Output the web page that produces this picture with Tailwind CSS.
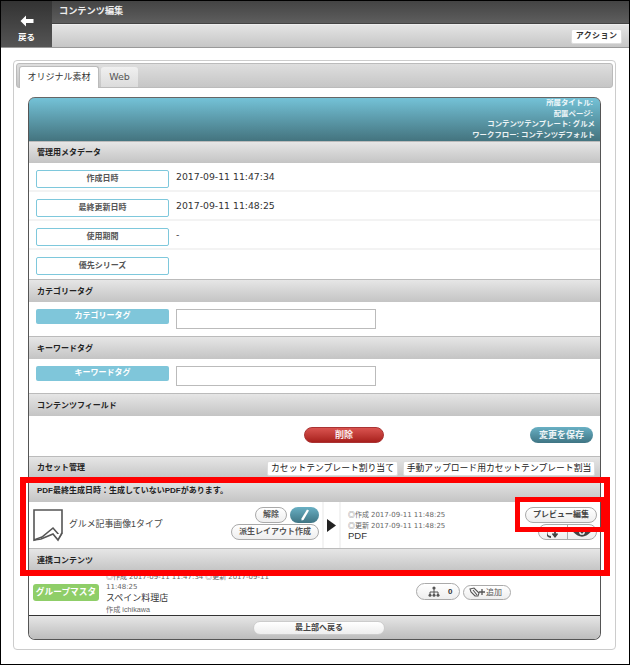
<!DOCTYPE html>
<html lang="ja">
<head>
<meta charset="utf-8">
<title>コンテンツ編集</title>
<script src="https://cdn.jsdelivr.net/npm/@tailwindcss/browser@4"></script>
</head>
<body class="bg-white">
<div class="relative w-[630px] h-[665px] border border-black bg-white overflow-hidden font-['Liberation_Sans','Noto_Sans_CJK_JP',sans-serif] text-[#333]">

  <!-- Top bar -->
  <header class="flex h-[47px] border-b border-[#999]">
    <div class="w-[51px] shrink-0 flex flex-col items-center pt-[14px] bg-gradient-to-b from-[#333] to-[#555] text-white">
      <svg width="14" height="12" viewBox="0 0 14 12"><path d="M6 0.5 L0.5 6 L6 11.5 L6 8 L13.5 8 L13.5 4 L6 4 Z" fill="#fff"/></svg>
      <span class="text-[8.5px] font-bold leading-none mt-[6px]">戻る</span>
    </div>
    <div class="flex-1 flex flex-col">
      <div class="h-[23px] bg-gradient-to-b from-[#444] to-[#5e5e5e] border-b border-[#444] pl-[7px] text-[9.2px] font-bold text-[#eee] leading-[21px]">コンテンツ編集</div>
      <div class="flex-1 bg-gradient-to-b from-[#e4e4e4] to-[#c6c6c6] border-t border-[#eee] flex justify-end items-center pr-[7px]">
        <button class="h-[15px] w-[51px] bg-white border border-[#ddd] rounded-[2px] text-[8px] font-bold leading-none tracking-[0.4px]">アクション</button>
      </div>
    </div>
  </header>

  <!-- Panel -->
  <div class="ml-[12px] mt-[12px] w-[603px] h-[590px] border border-[#ccc] rounded-[4px] px-[2px] pt-[2px]">
    <div class="h-[25px] bg-gradient-to-b from-[#dedede] to-[#c6c6c6] border border-[#bbb] rounded-[3px] flex items-end pl-[2px] gap-[2px]">
      <div class="w-[80px] h-[22px] -mb-px bg-white border border-[#bbb] border-b-0 rounded-t-[3px] text-[9px] text-center leading-[20px]">オリジナル素材</div>
      <div class="w-[37px] h-[20px] bg-gradient-to-b from-[#f0f0f0] to-[#dcdcdc] rounded-t-[3px] text-[9.5px] text-center leading-[20px] text-[#555] font-['DejaVu_Sans',sans-serif]">Web</div>
    </div>

    <!-- Card -->
    <div class="mt-[9px] ml-[12px] w-[573px] h-[543px] flex flex-col bg-white border-x border-x-[#555] rounded-[7px] border-b border-b-[#555]">
      <div class="h-[44px] shrink-0 rounded-t-[6px] border-t border-t-[#666] bg-gradient-to-b from-[#74c2d7] to-[#44747f] text-right pr-[5px] text-[7.4px] font-bold text-white/90 leading-[10.6px]">
        <p class="pr-[2px]">所属タイトル:</p>
        <p class="pr-[2px]">配置ページ:</p>
        <p>コンテンツテンプレート: グルメ</p>
        <p>ワークフロー: コンテンツデフォルト</p>
      </div>

      <div class="h-[22px] shrink-0 flex items-center pl-[8px] text-[8px] font-bold text-[#222] bg-gradient-to-b from-[#e6e6e6] to-[#c4c4c4] border-t border-[#bbb]">管理用メタデータ</div>
      <div class="h-[29px] shrink-0 flex pl-[7px] pt-[7px] border-b-2 border-[#f3f3f3]">
        <div class="w-[133px] h-[18px] border border-[#7ec8dc] rounded-[2px] text-[8px] text-[#555] text-center leading-[16px] font-bold">作成日時</div>
        <span class="ml-[7px] text-[9.3px] leading-[14px] font-['DejaVu_Sans',sans-serif]">2017-09-11 11:47:34</span>
      </div>
      <div class="h-[29px] shrink-0 flex pl-[7px] pt-[7px] border-b-2 border-[#f3f3f3]">
        <div class="w-[133px] h-[18px] border border-[#7ec8dc] rounded-[2px] text-[8px] text-[#555] text-center leading-[16px] font-bold">最終更新日時</div>
        <span class="ml-[7px] text-[9.3px] leading-[14px] font-['DejaVu_Sans',sans-serif]">2017-09-11 11:48:25</span>
      </div>
      <div class="h-[29px] shrink-0 flex pl-[7px] pt-[7px] border-b-2 border-[#f3f3f3]">
        <div class="w-[133px] h-[18px] border border-[#7ec8dc] rounded-[2px] text-[8px] text-[#555] text-center leading-[16px] font-bold">使用期間</div>
        <span class="ml-[7px] text-[9.3px] leading-[14px] font-['DejaVu_Sans',sans-serif]">-</span>
      </div>
      <div class="h-[29px] shrink-0 flex pl-[7px] pt-[7px]">
        <div class="w-[133px] h-[18px] border border-[#7ec8dc] rounded-[2px] text-[8px] text-[#555] text-center leading-[16px] font-bold">優先シリーズ</div>
      </div>

      <div class="h-[23px] shrink-0 flex items-center pl-[8px] pt-[1px] text-[8px] font-bold text-[#222] bg-gradient-to-b from-[#e6e6e6] to-[#c4c4c4] border-t border-[#bbb]">カテゴリータグ</div>
      <div class="h-[34px] shrink-0 flex pl-[7px] pt-[7px]">
        <div class="w-[133px] h-[15px] bg-[#7fc6da] rounded-[2px] text-[8px] text-white text-center leading-[14px] font-bold">カテゴリータグ</div>
        <div class="ml-[7px] w-[200px] h-[20px] bg-white border border-[#bbb]"></div>
      </div>

      <div class="h-[23px] shrink-0 flex items-center pl-[8px] pt-[1px] text-[8px] font-bold text-[#222] bg-gradient-to-b from-[#e6e6e6] to-[#c4c4c4] border-t border-[#bbb]">キーワードタグ</div>
      <div class="h-[34px] shrink-0 flex pl-[7px] pt-[7px]">
        <div class="w-[133px] h-[15px] bg-[#7fc6da] rounded-[2px] text-[8px] text-white text-center leading-[14px] font-bold">キーワードタグ</div>
        <div class="ml-[7px] w-[200px] h-[20px] bg-white border border-[#bbb]"></div>
      </div>

      <div class="h-[23px] shrink-0 flex items-center pl-[8px] pt-[1px] text-[8px] font-bold text-[#222] bg-gradient-to-b from-[#e6e6e6] to-[#c4c4c4] border-t border-[#bbb]">コンテンツフィールド</div>
      <div class="h-[40px] shrink-0 flex items-start pt-[11px] pl-[275px]">
        <button class="w-[80px] h-[16px] rounded-full bg-gradient-to-b from-[#d9534f] to-[#a81f1c] border border-[#a33] text-[9px] font-bold text-white/90 leading-none">削除</button>
        <button class="ml-[146px] w-[63px] h-[16px] rounded-full bg-gradient-to-b from-[#69b0c4] to-[#3f7584] text-[9px] font-bold text-white/90 leading-none">変更を保存</button>
      </div>

      <div class="h-[23px] shrink-0 flex items-center pl-[8px] pr-[5px] text-[8px] font-bold text-[#222] bg-gradient-to-b from-[#e6e6e6] to-[#c4c4c4] border-t border-[#bbb]">
        <span class="flex-1">カセット管理</span>
        <button class="w-[131px] h-[15px] bg-white border border-[#ddd] rounded-[2px] text-[8.8px] font-normal leading-none whitespace-nowrap">カセットテンプレート割り当て</button>
        <button class="ml-[5px] w-[192px] h-[15px] bg-white border border-[#ddd] rounded-[2px] text-[8.8px] font-normal leading-none whitespace-nowrap">手動アップロード用カセットテンプレート割当</button>
      </div>

      <div class="h-[23px] shrink-0 flex items-center pl-[8px] text-[8px] font-bold text-[#222] bg-gradient-to-b from-[#e6e6e6] to-[#c4c4c4] border-t border-[#bbb]">PDF最終生成日時：生成していないPDFがあります。</div>
      <div class="h-[46px] shrink-0 flex">
        <div class="w-[293px] shrink-0 flex items-center pl-[4px] relative">
          <svg width="30" height="34" viewBox="0 0 30 34" class="shrink-0">
            <path d="M1 2 H29 V25 L27 28 L20 20 L9 29 L1 32 Z" fill="#fff" stroke="#555" stroke-width="1.6"/>
            <path d="M1 32 L8 31 L20 26 L25 32 L29 25" fill="#fff" stroke="#555" stroke-width="1.6"/>
          </svg>
          <span class="ml-[6px] text-[8.9px] text-[#444]">グルメ記事画像1タイプ</span>
          <div class="absolute right-[3px] top-[5px] flex flex-col items-end gap-[1px]">
            <div class="flex gap-[3px]">
              <button class="w-[32px] h-[16px] rounded-full bg-gradient-to-b from-white to-[#eee] border border-[#aaa] text-[8px] leading-none text-[#555] font-bold">解除</button>
              <button class="w-[29px] h-[16px] rounded-full bg-gradient-to-b from-[#69b0c4] to-[#3f7584] flex items-center justify-center">
                <svg width="10" height="12" viewBox="0 0 10 12"><path d="M7 0.5 L9 1.5 L3.5 11 L1.5 11.5 L1.5 9.5 Z" fill="#fff"/></svg>
              </button>
            </div>
            <button class="w-[88px] h-[16px] rounded-full bg-gradient-to-b from-white to-[#eee] border border-[#aaa] text-[8px] leading-none text-[#555] font-bold">派生レイアウト作成</button>
          </div>
        </div>
        <div class="w-[19px] shrink-0 flex items-center justify-center border-x-2 border-[#f3f3f3]">
          <svg width="9" height="13" viewBox="0 0 9 13"><path d="M0 0 L9 6.5 L0 13 Z" fill="#222"/></svg>
        </div>
        <div class="flex-1 pl-[7px] pt-[8px] relative text-[#666]">
          <p class="text-[7px] leading-[9.5px]">◎作成 <span class="font-['DejaVu_Sans',sans-serif]">2017-09-11 11:48:25</span></p>
          <p class="text-[7px] leading-[9.5px]">◎更新 <span class="font-['DejaVu_Sans',sans-serif]">2017-09-11 11:48:25</span></p>
          <p class="text-[9.5px] leading-[10px] text-[#333]">PDF</p>
          <div class="absolute right-[3px] top-[5px] flex flex-col items-end gap-[1px]">
            <button class="w-[72px] h-[16px] rounded-full bg-gradient-to-b from-white to-[#eee] border border-[#aaa] text-[8px] leading-none text-[#444] font-bold">プレビュー編集</button>
            <div class="w-[59px] h-[16px] rounded-full bg-gradient-to-b from-white to-[#eee] border border-[#aaa] flex overflow-hidden">
              <div class="w-[29px] border-r border-[#aaa] flex items-center justify-center">
                <svg width="12" height="12" viewBox="0 0 12 12"><path d="M4 2 A4.5 4.5 0 0 0 4 11 M8 3 L8 10 M5.5 7.5 L8 10.5 L10.5 7.5" fill="none" stroke="#444" stroke-width="1.8"/></svg>
              </div>
              <div class="flex-1 flex items-center justify-center">
                <svg width="20" height="12" viewBox="0 0 18 11"><path d="M1 5.5 Q9 -3 17 5.5 Q9 14 1 5.5 Z" fill="#444"/><circle cx="9" cy="5.5" r="2.6" fill="#fff"/><circle cx="9" cy="5.5" r="1.4" fill="#444"/></svg>
              </div>
            </div>
          </div>
        </div>
      </div>

      <div class="h-[23px] shrink-0 flex items-center pl-[8px] pt-[2px] text-[8px] font-bold text-[#222] bg-gradient-to-b from-[#e6e6e6] to-[#c4c4c4] border-t border-[#bbb]">連携コンテンツ</div>
      <div class="h-[44px] shrink-0 flex relative overflow-hidden">
        <div class="mt-[13px] ml-[4px] w-[66px] h-[17px] shrink-0 bg-[#8fce68] rounded-[3px] text-[8.7px] font-bold text-white text-center leading-[16px]">グループマスタ</div>
        <div class="ml-[7px] w-[164px] shrink-0 text-[#666] mt-[1px]">
          <p class="text-[7px] leading-[9px]">◎作成 <span class="font-['DejaVu_Sans',sans-serif]">2017-09-11 11:47:34</span> ◎更新 <span class="font-['DejaVu_Sans',sans-serif]">2017-09-11 11:48:25</span></p>
          <p class="text-[9px] leading-[13px] text-[#333]">スペイン料理店</p>
          <p class="text-[7.2px] leading-[11px] -mt-[1px]">作成 ichikawa</p>
        </div>
        <div class="absolute left-[387px] top-[12px] w-[44px] h-[17px] rounded-full bg-gradient-to-b from-white to-[#eee] border border-[#aaa] flex items-center pl-[11px] gap-[8px]">
          <svg width="12" height="11" viewBox="0 0 12 11"><path d="M6 3 V6 M2 9 V6 H10 V9 M6 6 V9" fill="none" stroke="#555" stroke-width="1"/><circle cx="6" cy="2" r="1.6" fill="#555"/><circle cx="2" cy="9.3" r="1.5" fill="#555"/><circle cx="6" cy="9.3" r="1.5" fill="#555"/><circle cx="10" cy="9.3" r="1.5" fill="#555"/></svg>
          <span class="text-[8px] font-bold leading-none">0</span>
        </div>
        <div class="absolute left-[434px] top-[14px] w-[48px] h-[15px] rounded-full bg-gradient-to-b from-white to-[#eee] border border-[#aaa] flex items-center pl-[5px] text-[8px] text-[#555] leading-none">
          <svg width="16" height="11" viewBox="0 0 16 11"><path d="M1 2 L5 1 L10 6 L9 9 L6 9 L2 5 Z M4 3 L8 8" fill="none" stroke="#555" stroke-width="1.1"/><path d="M13 2 V8 M10 5 H16" stroke="#555" stroke-width="1.3"/></svg>
          <span class="ml-[1px]">追加</span>
        </div>
      </div>

      <div class="flex-1 rounded-b-[6px] border-t border-t-[#333] bg-gradient-to-b from-[#e6e6e6] to-[#bdbdbd] flex pl-[224px] pt-[5px]">
        <button class="w-[132px] h-[14px] rounded-full bg-gradient-to-b from-white to-[#eee] border border-[#ccc] text-[8px] leading-none font-bold text-[#444]">最上部へ戻る</button>
      </div>
    </div>
  </div>

  <!-- Red callouts drawn on top of the screenshot -->
  <div class="absolute left-[19px] top-[476px] w-[590px] h-[99px] border-[6px] border-[#f00]"></div>
  <div class="absolute left-[514px] top-[496px] w-[91px] h-[35px] border-[5px] border-[#f00]"></div>
</div>
</body>
</html>
